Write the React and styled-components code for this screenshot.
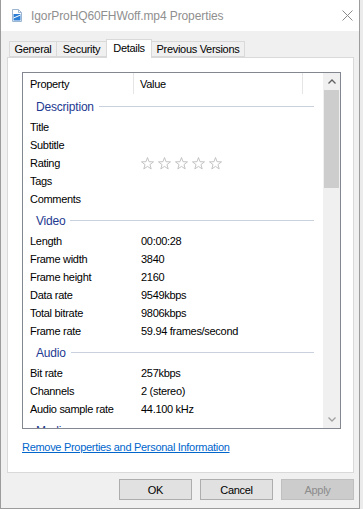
import React from "react";
import styled, { createGlobalStyle } from "styled-components";

const Global = createGlobalStyle`
  html, body {
    margin: 0;
    padding: 0;
    background: #ebebeb;
  }
  * {
    box-sizing: border-box;
  }
`;

const groups = [
  {
    name: "Description",
    rows: [
      ["Title", ""],
      ["Subtitle", ""],
      ["Rating", "stars"],
      ["Tags", ""],
      ["Comments", ""],
    ],
  },
  {
    name: "Video",
    rows: [
      ["Length", "00:00:28"],
      ["Frame width", "3840"],
      ["Frame height", "2160"],
      ["Data rate", "9549kbps"],
      ["Total bitrate", "9806kbps"],
      ["Frame rate", "59.94 frames/second"],
    ],
  },
  {
    name: "Audio",
    rows: [
      ["Bit rate", "257kbps"],
      ["Channels", "2 (stereo)"],
      ["Audio sample rate", "44.100 kHz"],
    ],
  },
  { name: "Media", rows: [] },
];

const tabs = [
  { label: "General", width: 48 },
  { label: "Security", width: 51 },
  { label: "Details", width: 46, active: true },
  { label: "Previous Versions", width: 94 },
];

export default function App() {
  return (
    <>
      <Global />
      <Window>
        <TitleBar>
          <FileIcon />
          <TitleText>IgorProHQ60FHWoff.mp4 Properties</TitleText>
          <Close>
            <svg width="11" height="11" viewBox="0 0 11 11">
              <path d="M0.5 0.5 L10.5 10.5 M10.5 0.5 L0.5 10.5" stroke="#8a8a8a" strokeWidth="1" fill="none" />
            </svg>
          </Close>
        </TitleBar>
        <Body>
          <TabRow>
            {tabs.map((t) => (
              <Tab key={t.label} $active={t.active} $width={t.width}>
                {t.label}
              </Tab>
            ))}
          </TabRow>
          <Panel>
            <ListBox>
              <ListContent>
                <Header>
                  <HeadCell $w={111}>Property</HeadCell>
                  <HeadCell $w={169}>Value</HeadCell>
                </Header>
                {groups.map((g) => (
                  <React.Fragment key={g.name}>
                    <GroupRow>
                      <GroupLabel>{g.name}</GroupLabel>
                      <GroupLine />
                    </GroupRow>
                    {g.rows.map(([k, v]) => (
                      <Row key={k}>
                        <Key>{k}</Key>
                        <Val>{v === "stars" ? <Stars /> : v}</Val>
                      </Row>
                    ))}
                  </React.Fragment>
                ))}
              </ListContent>
              <ScrollBar>
                <Arrow>
                  <svg width="8" height="5" viewBox="0 0 8 5">
                    <polyline points="0.5,4.5 4,1 7.5,4.5" stroke="#606060" strokeWidth="1.3" fill="none" />
                  </svg>
                </Arrow>
                <Thumb />
                <Track />
                <Arrow>
                  <svg width="8" height="5" viewBox="0 0 8 5">
                    <polyline points="0.5,0.5 4,4 7.5,0.5" stroke="#a0a0a0" strokeWidth="1.3" fill="none" />
                  </svg>
                </Arrow>
              </ScrollBar>
            </ListBox>
            <Link href="#">Remove Properties and Personal Information</Link>
          </Panel>
          <Footer>
            <Button>OK</Button>
            <Button>Cancel</Button>
            <Button $disabled>Apply</Button>
          </Footer>
        </Body>
      </Window>
    </>
  );
}

function FileIcon() {
  return (
    <svg width="10" height="13" viewBox="0 0 10 13" style={{ flexShrink: 0 }}>
      <path d="M0.5 0.5 H6.5 L9.5 3.5 V12.5 H0.5 Z" fill="#ffffff" stroke="#9db7d3" />
      <path d="M6.5 0.5 V3.5 H9.5" fill="none" stroke="#9db7d3" />
      <rect x="1.5" y="5" width="7" height="6.5" fill="#2a7fd4" />
      <path d="M1.5 9 L8.5 6" stroke="#ffffff" strokeWidth="1" />
    </svg>
  );
}

function Stars() {
  return (
    <StarRow>
      {[0, 1, 2, 3, 4].map((i) => (
        <svg key={i} width="13" height="13" viewBox="0 0 13 13">
          <polygon
            points="6.5,0.5 8.03,4.7 12.49,4.85 8.97,7.6 10.2,11.9 6.5,9.4 2.8,11.9 4.03,7.6 0.51,4.85 4.97,4.7"
            fill="none"
            stroke="#bdbdbd"
            strokeWidth="0.9"
            strokeLinejoin="round"
          />
        </svg>
      ))}
    </StarRow>
  );
}

const Window = styled.div`
  width: 360px;
  height: 509px;
  display: flex;
  flex-direction: column;
  border: 1px solid #9c9c9c;
  border-top: none;
  background: #f0f0f0;
  font-family: "Liberation Sans", Arial, sans-serif;
  font-size: 11px;
  letter-spacing: -0.3px;
  color: #000;
`;

const TitleBar = styled.div`
  height: 31px;
  flex-shrink: 0;
  background: #ffffff;
  display: flex;
  align-items: center;
  padding-left: 11px;
  padding-bottom: 1px;
`;

const TitleText = styled.div`
  margin-left: 9px;
  font-size: 12px;
  letter-spacing: -0.1px;
  color: #8f8f8f;
  flex: 1;
  padding-top: 1px;
`;

const Close = styled.div`
  width: 11px;
  height: 11px;
  margin-right: 6px;
  margin-top: 1px;
  display: flex;
`;

const Body = styled.div`
  flex: 1;
  display: flex;
  flex-direction: column;
  padding: 8px 5px 0 6px;
`;

const TabRow = styled.div`
  height: 18px;
  display: flex;
  align-items: flex-end;
  padding-left: 2px;
  position: relative;
  z-index: 1;
`;

const Tab = styled.div`
  width: ${(p) => p.$width}px;
  height: ${(p) => (p.$active ? 19 : 16)}px;
  margin-bottom: ${(p) => (p.$active ? -1 : 0)}px;
  margin-left: -1px;
  border: 1px solid #d9d9d9;
  border-bottom: ${(p) => (p.$active ? "none" : "1px solid #d9d9d9")};
  background: ${(p) => (p.$active ? "#ffffff" : "#f0f0f0")};
  display: flex;
  justify-content: center;
  align-items: ${(p) => (p.$active ? "flex-start" : "center")};
  padding-top: ${(p) => (p.$active ? 2 : 0)}px;
  white-space: nowrap;
  &:first-child {
    margin-left: 0;
  }
`;

const Panel = styled.div`
  height: 416px;
  background: #ffffff;
  border: 1px solid #d9d9d9;
  padding: 14px 12px 0 14px;
  display: flex;
  flex-direction: column;
`;

const ListBox = styled.div`
  height: 357px;
  flex-shrink: 0;
  border: 1px solid #828790;
  display: flex;
  overflow: hidden;
`;

const ListContent = styled.div`
  flex: 1;
  overflow: hidden;
`;

const Header = styled.div`
  height: 21px;
  display: flex;
`;

const HeadCell = styled.div`
  width: ${(p) => p.$w}px;
  border-right: 1px solid #e5e5e5;
  padding: 5px 0 0 7px;
  & + & {
    padding-left: 6px;
  }
`;

const GroupRow = styled.div`
  height: 24px;
  display: flex;
  align-items: center;
  padding: 1px 9px 0 13px;
`;

const GroupLabel = styled.div`
  font-size: 12px;
  letter-spacing: -0.2px;
  color: #1e3991;
`;

const GroupLine = styled.div`
  flex: 1;
  margin-left: 5px;
  height: 1px;
  background: #c9d1de;
`;

const Row = styled.div`
  height: 18px;
  display: flex;
  align-items: center;
`;

const Key = styled.div`
  width: 112px;
  padding-left: 7px;
  white-space: nowrap;
`;

const Val = styled.div`
  padding-left: 6px;
  white-space: nowrap;
  display: flex;
  align-items: center;
`;

const StarRow = styled.div`
  display: flex;
  gap: 4px;
`;

const ScrollBar = styled.div`
  width: 17px;
  flex-shrink: 0;
  background: #f0f0f0;
  display: flex;
  flex-direction: column;
`;

const Arrow = styled.div`
  height: 17px;
  display: flex;
  align-items: center;
  justify-content: center;
`;

const Thumb = styled.div`
  height: 98px;
  margin: 0 1px;
  background: #cdcdcd;
`;

const Track = styled.div`
  flex: 1;
`;

const Link = styled.a`
  margin-top: 12px;
  color: #0066cc;
  text-decoration: underline;
  align-self: flex-start;
  line-height: 13px;
`;

const Footer = styled.div`
  display: flex;
  justify-content: flex-end;
  gap: 8px;
  padding-top: 6px;
`;

const Button = styled.div`
  width: 73px;
  height: 21px;
  display: flex;
  align-items: center;
  justify-content: center;
  border: 1px solid ${(p) => (p.$disabled ? "#bfbfbf" : "#adadad")};
  background: ${(p) => (p.$disabled ? "#cccccc" : "#e1e1e1")};
  color: ${(p) => (p.$disabled ? "#8b8b8b" : "#000")};
`;
